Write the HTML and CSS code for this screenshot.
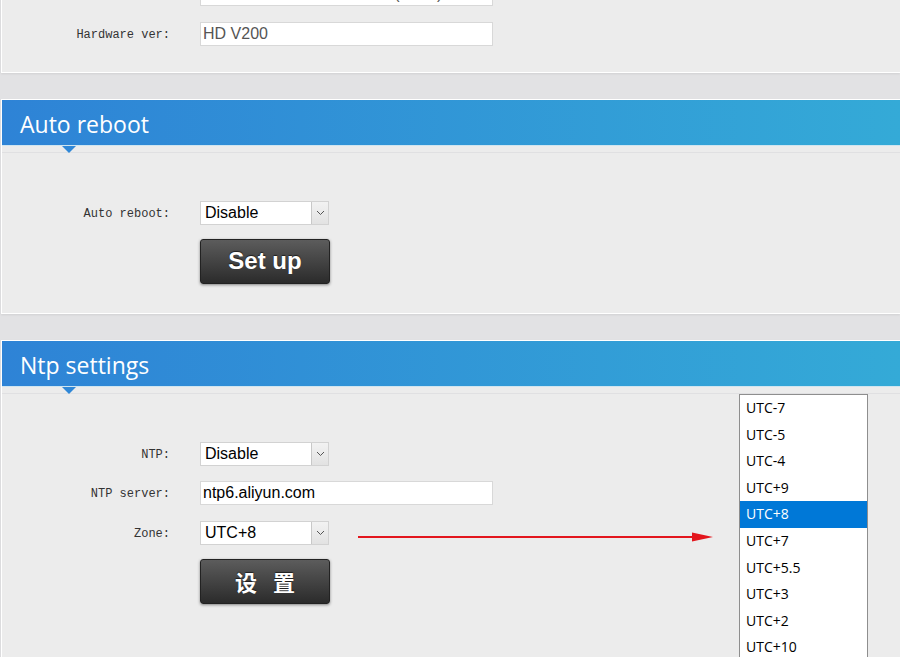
FILE: index.html
```html
<!DOCTYPE html>
<html lang="en">
<head>
    <meta charset="UTF-8">
    <meta name="viewport" content="width=device-width, initial-scale=1.0">
    <title>System settings</title>
    <link rel="stylesheet" href="styles.css">
</head>
<body>
    <div class="page">
        <!-- Version info -->
        <div class="panel panel-first">
            <div class="panel-body">
                <div class="form-row">
                    <span class="field-label">Firmware ver:</span>
                    <div class="text-box muted">B1.1.0 Standard 20190228(V200)</div>
                </div>
                <div class="form-row">
                    <span class="field-label">Hardware ver:</span>
                    <div class="text-box muted">HD V200</div>
                </div>
            </div>
        </div>

        <!-- Auto reboot -->
        <div class="panel">
            <div class="panel-head"><h2>Auto reboot</h2></div>
            <div class="panel-body">
                <div class="form-row">
                    <span class="field-label">Auto reboot:</span>
                    <div class="select-box">
                        <span class="select-value">Disable</span>
                        <span class="select-arrow">
                            <svg width="9" height="6" viewBox="0 0 9 6"><path d="M1 1 L4.5 4.5 L8 1" fill="none" stroke="#555" stroke-width="1"/></svg>
                        </span>
                    </div>
                </div>
                <div class="form-actions">
                    <button class="dark-button">Set up</button>
                </div>
            </div>
        </div>

        <!-- Ntp settings -->
        <div class="panel panel-last">
            <div class="panel-head"><h2>Ntp settings</h2></div>
            <div class="panel-body">
                <div class="form-row">
                    <span class="field-label">NTP:</span>
                    <div class="select-box">
                        <span class="select-value">Disable</span>
                        <span class="select-arrow">
                            <svg width="9" height="6" viewBox="0 0 9 6"><path d="M1 1 L4.5 4.5 L8 1" fill="none" stroke="#555" stroke-width="1"/></svg>
                        </span>
                    </div>
                </div>
                <div class="form-row">
                    <span class="field-label">NTP server:</span>
                    <div class="text-box">ntp6.aliyun.com</div>
                </div>
                <div class="form-row">
                    <span class="field-label">Zone:</span>
                    <div class="select-box">
                        <span class="select-value">UTC+8</span>
                        <span class="select-arrow">
                            <svg width="9" height="6" viewBox="0 0 9 6"><path d="M1 1 L4.5 4.5 L8 1" fill="none" stroke="#555" stroke-width="1"/></svg>
                        </span>
                    </div>
                </div>
                <div class="form-actions">
                    <button class="dark-button cjk">设<span class="gap"></span>置</button>
                </div>
            </div>
        </div>

        <!-- red pointer to the open zone list -->
        <svg class="hint-arrow" width="356" height="12" viewBox="0 0 356 12">
            <line x1="0" y1="6" x2="338" y2="6" stroke="#e3161d" stroke-width="2"/>
            <polygon points="334,1.5 355,6 334,10.5" fill="#e3161d"/>
        </svg>

        <!-- zone dropdown, opened -->
        <ul class="option-list">
            <li>UTC-7</li>
            <li>UTC-5</li>
            <li>UTC-4</li>
            <li>UTC+9</li>
            <li class="selected">UTC+8</li>
            <li>UTC+7</li>
            <li>UTC+5.5</li>
            <li>UTC+3</li>
            <li>UTC+2</li>
            <li>UTC+10</li>
            <li>UTC+1</li>
        </ul>
    </div>
</body>
</html>
```

FILE: styles.css
```css
* {
    margin: 0;
    padding: 0;
    box-sizing: border-box;
}

html, body {
    height: 100%;
    overflow: hidden;
}

body {
    background-color: #e2e2e4;
    font-family: 'Liberation Sans', Arial, sans-serif;
    color: #000;
}

.page {
    position: relative;
    display: flow-root;
    height: 100%;
}

/* Panels */
.panel {
    margin-left: 1px;
    margin-bottom: 26px;
    background-color: #ececec;
    border-top: 1px solid #fff;
    border-left: 1px solid #fff;
    border-bottom: 1px solid #fff;
    box-shadow: 0 1px 2px rgba(0, 0, 0, 0.08);
}

.panel-first {
    margin-top: -40px;
}

.panel-head {
    position: relative;
    height: 46px;
    background: linear-gradient(to right, #2e83d6, #34aad7);
    border-bottom: 1px solid #cfe5f0;
}

.panel-head::after {
    content: '';
    position: absolute;
    left: 60px;
    bottom: -8px;
    border-left: 7px solid transparent;
    border-right: 7px solid transparent;
    border-top: 7px solid #2f87d7;
}

.panel-head h2 {
    font-family: 'Open Sans', 'Noto Sans', sans-serif;
    font-weight: normal;
    font-size: 23px;
    line-height: 48px;
    color: #fff;
    padding-left: 18px;
}

.panel-body {
    margin-top: 6px;
    border-top: 1px solid #e0e0e2;
    padding: 48px 0 29px;
}

.panel-first .panel-body {
    margin-top: 0;
    border-top: none;
    padding: 21px 0 26px;
}

.panel-last .panel-body {
    padding-bottom: 80px;
}

/* Form rows */
.form-row {
    display: flex;
    align-items: center;
    gap: 30px;
    height: 24px;
}

.form-row + .form-row {
    margin-top: 15.5px;
}

.field-label {
    width: 168px;
    padding-top: 2px;
    text-align: right;
    font-family: 'Liberation Mono', monospace;
    font-size: 12px;
    color: #333;
}

.text-box {
    width: 293px;
    height: 24px;
    background-color: #fff;
    border: 1px solid #d8d8d8;
    padding-left: 2px;
    font-size: 16px;
    line-height: 22px;
    white-space: nowrap;
    overflow: hidden;
}

.text-box.muted {
    color: #555;
}

.select-box {
    display: flex;
    width: 129px;
    height: 24px;
    background-color: #fff;
    border: 1px solid #d2d2d2;
}

.select-value {
    flex: 1;
    padding-left: 4px;
    font-size: 16px;
    line-height: 22px;
}

.select-arrow {
    width: 17px;
    display: flex;
    align-items: center;
    justify-content: center;
    background: linear-gradient(#f2f2f2, #e2e2e2);
    border-left: 1px solid #c8c8c8;
}

/* Buttons */
.form-actions {
    display: flex;
    padding-left: 198px;
    margin-top: 14px;
}

.dark-button {
    width: 130px;
    height: 45px;
    border: 1px solid #222;
    border-radius: 3px;
    background: linear-gradient(#5c5c5c, #2b2b2b);
    box-shadow: 0 1px 3px rgba(0, 0, 0, 0.45);
    color: #fff;
    font-family: 'Liberation Sans', Arial, sans-serif;
    font-weight: bold;
    font-size: 24px;
    text-shadow: 0 -1px 1px rgba(0, 0, 0, 0.6);
    cursor: pointer;
}

.dark-button.cjk {
    font-family: 'Noto Sans CJK SC', sans-serif;
    font-size: 22px;
}

.dark-button .gap {
    display: inline-block;
    width: 16px;
}

/* Annotation arrow and open list */
.hint-arrow {
    position: absolute;
    left: 358px;
    top: 531px;
}

.option-list {
    position: absolute;
    left: 739px;
    top: 394px;
    width: 129px;
    list-style: none;
    background-color: #fff;
    border: 1px solid #8e8e8e;
    font-family: 'Open Sans', 'Noto Sans', sans-serif;
    font-size: 14px;
}

.option-list li {
    height: 26.6px;
    line-height: 26.6px;
    padding-left: 6px;
    color: #000;
}

.option-list li.selected {
    background-color: #0078d7;
    color: #fff;
}
```
